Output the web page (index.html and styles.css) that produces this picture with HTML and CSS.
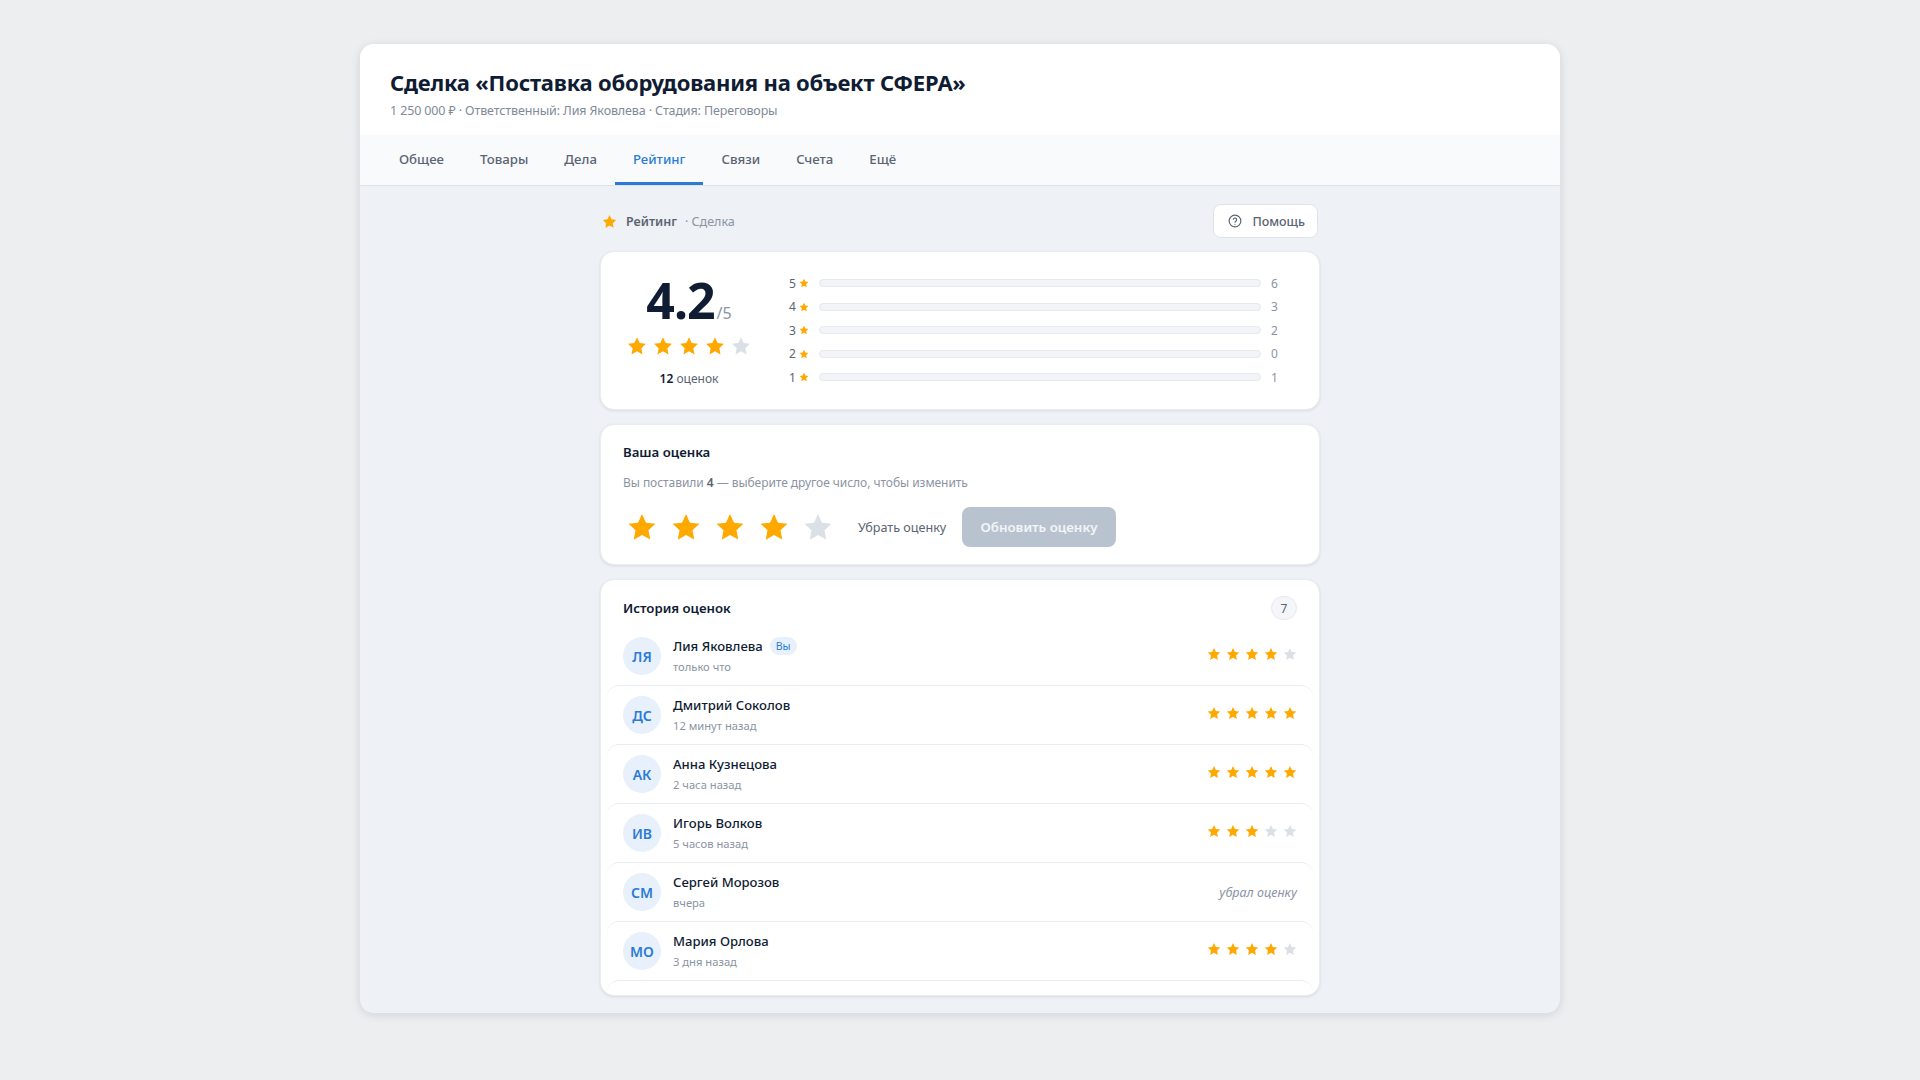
FILE: index.html
```html
<!DOCTYPE html>
<html lang="ru">
<head>
    <meta charset="UTF-8">
    <meta name="viewport" content="width=device-width, initial-scale=1.0">
    <title>Сделка — Рейтинг</title>
    <link rel="stylesheet" href="styles.css">
</head>
<body>
    <svg class="sprite" width="0" height="0" aria-hidden="true">
        <symbol id="star" viewBox="0 0 24 24">
            <path d="M12 1.6l3.2 6.9 7.5.9-5.5 5.2 1.4 7.5L12 18.4l-6.6 3.7 1.4-7.5-5.5-5.2 7.5-.9z"/>
        </symbol>
    </svg>

    <div class="deal">
        <header class="deal-head">
            <h1>Сделка «Поставка оборудования на объект СФЕРА»</h1>
            <p class="deal-meta">1 250 000 ₽ · Ответственный: Лия Яковлева · Стадия: Переговоры</p>
        </header>

        <nav class="tabs">
            <a class="tab">Общее</a>
            <a class="tab">Товары</a>
            <a class="tab">Дела</a>
            <a class="tab active">Рейтинг</a>
            <a class="tab">Связи</a>
            <a class="tab">Счета</a>
            <a class="tab">Ещё</a>
        </nav>

        <main class="content">
            <div class="column">
                <div class="topbar">
                    <div class="crumb">
                        <svg class="star on crumb-star"><use href="#star"/></svg>
                        <span class="crumb-title">Рейтинг</span>
                        <span class="crumb-sub">· Сделка</span>
                    </div>
                    <button class="help-btn">
                        <svg class="help-icon" viewBox="0 0 24 24" fill="none" stroke="currentColor" stroke-width="2" stroke-linecap="round">
                            <circle cx="12" cy="12" r="10"/>
                            <path d="M9.1 9a3 3 0 0 1 5.8 1c0 2-2.9 2.6-2.9 4"/>
                            <path d="M12 17.5h.01"/>
                        </svg>
                        Помощь
                    </button>
                </div>

                <section class="card summary">
                    <div class="score">
                        <div class="score-num"><span class="score-big">4.2</span><span class="score-of">/5</span></div>
                        <div class="stars score-stars">
                            <svg class="star on"><use href="#star"/></svg>
                            <svg class="star on"><use href="#star"/></svg>
                            <svg class="star on"><use href="#star"/></svg>
                            <svg class="star on"><use href="#star"/></svg>
                            <svg class="star"><use href="#star"/></svg>
                        </div>
                        <div class="score-count"><b>12</b> оценок</div>
                    </div>
                    <div class="bars">
                        <div class="bar-row"><span class="bar-label">5</span><svg class="star on"><use href="#star"/></svg><div class="bar"></div><span class="bar-count">6</span></div>
                        <div class="bar-row"><span class="bar-label">4</span><svg class="star on"><use href="#star"/></svg><div class="bar"></div><span class="bar-count">3</span></div>
                        <div class="bar-row"><span class="bar-label">3</span><svg class="star on"><use href="#star"/></svg><div class="bar"></div><span class="bar-count">2</span></div>
                        <div class="bar-row"><span class="bar-label">2</span><svg class="star on"><use href="#star"/></svg><div class="bar"></div><span class="bar-count">0</span></div>
                        <div class="bar-row"><span class="bar-label">1</span><svg class="star on"><use href="#star"/></svg><div class="bar"></div><span class="bar-count">1</span></div>
                    </div>
                </section>

                <section class="card mine">
                    <h2>Ваша оценка</h2>
                    <p class="mine-hint">Вы поставили <b>4</b> — выберите другое число, чтобы изменить</p>
                    <div class="mine-actions">
                        <div class="stars mine-stars">
                            <svg class="star on"><use href="#star"/></svg>
                            <svg class="star on"><use href="#star"/></svg>
                            <svg class="star on"><use href="#star"/></svg>
                            <svg class="star on"><use href="#star"/></svg>
                            <svg class="star"><use href="#star"/></svg>
                        </div>
                        <button class="clear-btn">Убрать оценку</button>
                        <button class="save-btn" disabled>Обновить оценку</button>
                    </div>
                </section>

                <section class="card history">
                    <div class="history-head">
                        <h2>История оценок</h2>
                        <span class="count-pill">7</span>
                    </div>
                    <ul class="history-list">
                        <li class="vote">
                            <div class="avatar">ЛЯ</div>
                            <div class="vote-info">
                                <div class="vote-name">Лия Яковлева <span class="you">Вы</span></div>
                                <div class="vote-time">только что</div>
                            </div>
                            <div class="stars vote-stars">
                                <svg class="star on"><use href="#star"/></svg>
                                <svg class="star on"><use href="#star"/></svg>
                                <svg class="star on"><use href="#star"/></svg>
                                <svg class="star on"><use href="#star"/></svg>
                                <svg class="star"><use href="#star"/></svg>
                            </div>
                        </li>
                        <li class="vote">
                            <div class="avatar">ДС</div>
                            <div class="vote-info">
                                <div class="vote-name">Дмитрий Соколов</div>
                                <div class="vote-time">12 минут назад</div>
                            </div>
                            <div class="stars vote-stars">
                                <svg class="star on"><use href="#star"/></svg>
                                <svg class="star on"><use href="#star"/></svg>
                                <svg class="star on"><use href="#star"/></svg>
                                <svg class="star on"><use href="#star"/></svg>
                                <svg class="star on"><use href="#star"/></svg>
                            </div>
                        </li>
                        <li class="vote">
                            <div class="avatar">АК</div>
                            <div class="vote-info">
                                <div class="vote-name">Анна Кузнецова</div>
                                <div class="vote-time">2 часа назад</div>
                            </div>
                            <div class="stars vote-stars">
                                <svg class="star on"><use href="#star"/></svg>
                                <svg class="star on"><use href="#star"/></svg>
                                <svg class="star on"><use href="#star"/></svg>
                                <svg class="star on"><use href="#star"/></svg>
                                <svg class="star on"><use href="#star"/></svg>
                            </div>
                        </li>
                        <li class="vote">
                            <div class="avatar">ИВ</div>
                            <div class="vote-info">
                                <div class="vote-name">Игорь Волков</div>
                                <div class="vote-time">5 часов назад</div>
                            </div>
                            <div class="stars vote-stars">
                                <svg class="star on"><use href="#star"/></svg>
                                <svg class="star on"><use href="#star"/></svg>
                                <svg class="star on"><use href="#star"/></svg>
                                <svg class="star"><use href="#star"/></svg>
                                <svg class="star"><use href="#star"/></svg>
                            </div>
                        </li>
                        <li class="vote">
                            <div class="avatar">СМ</div>
                            <div class="vote-info">
                                <div class="vote-name">Сергей Морозов</div>
                                <div class="vote-time">вчера</div>
                            </div>
                            <div class="vote-removed">убрал оценку</div>
                        </li>
                        <li class="vote">
                            <div class="avatar">МО</div>
                            <div class="vote-info">
                                <div class="vote-name">Мария Орлова</div>
                                <div class="vote-time">3 дня назад</div>
                            </div>
                            <div class="stars vote-stars">
                                <svg class="star on"><use href="#star"/></svg>
                                <svg class="star on"><use href="#star"/></svg>
                                <svg class="star on"><use href="#star"/></svg>
                                <svg class="star on"><use href="#star"/></svg>
                                <svg class="star"><use href="#star"/></svg>
                            </div>
                        </li>
                        <li class="vote vote-cut"></li>
                    </ul>
                </section>
            </div>
        </main>
    </div>
</body>
</html>
```

FILE: styles.css
```css
* {
    margin: 0;
    padding: 0;
    box-sizing: border-box;
    font-family: 'Noto Sans', sans-serif;
}

body {
    min-height: 100vh;
    background: #eceef0;
    padding-top: 44px;
}

.sprite {
    position: absolute;
}

.deal {
    width: 1200px;
    height: 969px;
    margin: 0 auto;
    background: #eef1f5;
    border-radius: 14px;
    box-shadow: 0 2px 10px rgba(15, 30, 60, 0.12);
    overflow: hidden;
}

.deal-head {
    background: #fff;
    height: 91px;
    padding: 23px 30px 0;
}

h1 {
    font-size: 22px;
    line-height: 30px;
    font-weight: 700;
    letter-spacing: -0.2px;
    color: #0f1c33;
}

.deal-meta {
    font-size: 12.5px;
    line-height: 18px;
    margin-top: 5px;
    letter-spacing: -0.13px;
    color: #7f8a99;
}

.tabs {
    display: flex;
    height: 51px;
    padding-left: 21px;
    background: #f9fafc;
    border-bottom: 1px solid #dfe3e9;
}

.tab {
    display: flex;
    align-items: center;
    height: 50px;
    padding: 0 18px;
    font-size: 13.2px;
    font-weight: 500;
    color: #5a6472;
    border-bottom: 3px solid transparent;
}

.tab.active {
    color: #2a7bd6;
    border-bottom-color: #2a7bd6;
}

.content {
    display: flex;
    justify-content: center;
    padding-top: 18px;
}

.column {
    width: 720px;
}

.topbar {
    display: flex;
    align-items: center;
    justify-content: space-between;
    height: 34px;
    margin-bottom: 13px;
    padding: 0 2px;
}

.crumb {
    display: flex;
    align-items: center;
    font-size: 12.5px;
}

.crumb-star {
    width: 15px;
    height: 15px;
    margin-right: 9px;
}

.crumb-title {
    font-weight: 600;
    color: #5a6472;
    margin-right: 8px;
}

.crumb-sub {
    color: #8a94a3;
}

.help-btn {
    display: flex;
    align-items: center;
    gap: 10px;
    height: 34px;
    padding: 0 12px 0 14px;
    background: #fff;
    border: 1px solid #dfe3e9;
    border-radius: 8px;
    font-size: 12.5px;
    font-weight: 500;
    color: #5a6472;
}

.help-icon {
    width: 14px;
    height: 14px;
}

.star {
    fill: #dbe0e7;
}

.star.on {
    fill: #ffa800;
}

.stars {
    display: flex;
}

.card {
    background: #fff;
    border-radius: 14px;
    border: 1px solid #e9ecf0;
    box-shadow: 0 1px 3px rgba(15, 30, 60, 0.1);
    margin-bottom: 14px;
}

h2 {
    font-size: 13.2px;
    line-height: 20px;
    font-weight: 600;
    color: #0f1c33;
}

.summary {
    display: flex;
    height: 159px;
    padding: 20px 30px 20px 22px;
}

.score {
    width: 132px;
    margin-right: 34px;
    text-align: center;
}

.score-num {
    display: flex;
    justify-content: center;
    align-items: baseline;
    height: 52px;
    padding-top: 5px;
}

.score-big {
    font-size: 50px;
    line-height: 46px;
    font-weight: 700;
    letter-spacing: -1px;
    color: #0f1c33;
}

.score-of {
    font-size: 16px;
    color: #8a94a3;
    margin-left: 2px;
}

.score-stars {
    justify-content: center;
    gap: 6px;
    margin-top: 12px;
}

.score-stars .star {
    width: 20px;
    height: 20px;
}

.score-count {
    font-size: 12px;
    line-height: 18px;
    margin-top: 14px;
    color: #5a6472;
}

.score-count b {
    font-weight: 600;
    color: #0f1c33;
}

.bars {
    flex: 1;
    display: flex;
    flex-direction: column;
    gap: 5.6px;
    padding-top: 2px;
}

.bar-row {
    display: flex;
    align-items: center;
    height: 18px;
    font-size: 12px;
}

.bar-row .star {
    width: 10px;
    height: 10px;
    margin: 0 0 0 3px;
}

.bar-label {
    width: 7px;
    color: #5a6472;
}

.bar {
    flex: 1;
    height: 8px;
    margin: 0 10px 0 10px;
    background: #f2f4f7;
    border: 1px solid #e6e9ee;
    border-radius: 4px;
}

.bar-count {
    width: 18px;
    color: #8a94a3;
}

.mine {
    height: 141px;
    padding: 17px 22px;
}

.mine-hint {
    font-size: 12px;
    line-height: 18px;
    margin-top: 12px;
    letter-spacing: -0.05px;
    color: #8a94a3;
}

.mine-hint b {
    font-weight: 600;
    color: #5a6472;
}

.mine-actions {
    display: flex;
    align-items: center;
    margin-top: 15px;
    padding-left: 4px;
}

.mine-stars {
    gap: 14px;
    margin-right: 25px;
}

.mine-stars .star {
    width: 30px;
    height: 30px;
}

.clear-btn {
    width: 104px;
    background: none;
    border: none;
    text-align: left;
    font-size: 12.6px;
    color: #5a6472;
}

.save-btn {
    width: 154px;
    height: 40px;
    background: #b9c3d0;
    border: none;
    border-radius: 8px;
    font-size: 13.3px;
    font-weight: 600;
    color: #f3f5f8;
}

.history {
    height: 417px;
    margin-bottom: 0;
    padding: 15px 6px 0;
    overflow: hidden;
}

.history-head {
    display: flex;
    align-items: center;
    justify-content: space-between;
    padding: 0 16px;
    height: 26px;
}

.count-pill {
    display: flex;
    align-items: center;
    justify-content: center;
    width: 26px;
    height: 24px;
    font-size: 12px;
    color: #5a6472;
    background: #f4f6f9;
    border: 1px solid #e6e9ee;
    border-radius: 12px;
}

.history-list {
    list-style: none;
    margin-top: 5px;
}

.vote {
    display: flex;
    align-items: center;
    height: 59px;
    padding: 0 16px;
    border-radius: 12px 12px 0 0;
    border-top: 1px solid #e9ecf0;
}

.vote:first-child {
    border-top-color: transparent;
}

.vote-cut {
    height: 16px;
}

.avatar {
    display: flex;
    align-items: center;
    justify-content: center;
    flex-shrink: 0;
    width: 38px;
    height: 38px;
    margin-right: 12px;
    border-radius: 50%;
    background: #e8f0fb;
    color: #2a7bd6;
    font-size: 14px;
    font-weight: 600;
}

.vote-info {
    flex: 1;
    margin-top: -2px;
}

.vote-name {
    display: flex;
    align-items: center;
    gap: 2px;
    font-size: 13.1px;
    line-height: 20px;
    font-weight: 500;
    color: #0f1c33;
}

.you {
    margin-left: 5px;
    padding: 0 6px;
    font-size: 10.5px;
    line-height: 18px;
    font-weight: 400;
    color: #2a7bd6;
    background: #e8f0fb;
    border-radius: 9px;
}

.vote-time {
    font-size: 11.2px;
    line-height: 16px;
    margin-top: 3px;
    color: #8a94a3;
}

.vote-stars {
    gap: 5px;
    margin-top: -4px;
}

.vote-stars .star {
    width: 14px;
    height: 14px;
}

.vote-removed {
    font-size: 12.5px;
    font-style: italic;
    color: #8a94a3;
}
```
